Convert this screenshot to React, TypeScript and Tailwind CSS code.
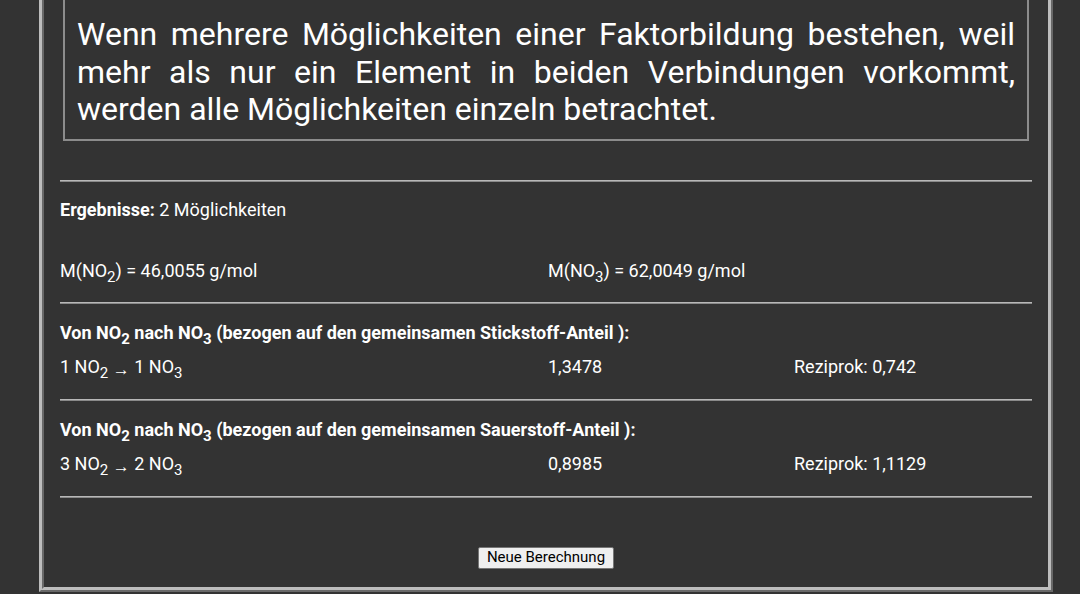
import React from "react";

function Sub({ children }: { children: React.ReactNode }) {
  return <span className="relative top-[5px] text-[15px] leading-none">{children}</span>;
}

function Rule() {
  return <div className="h-[2px] border-t border-b border-t-[#b8b8b8] border-b-[#8a8a8a]" />;
}

function ResultBlock({
  anteil,
  left,
  right,
  factor,
  reziprok,
}: {
  anteil: string;
  left: string;
  right: string;
  factor: string;
  reziprok: string;
}) {
  return (
    <div className="pt-[18px] pb-[22px]">
      <p className="font-bold">
        Von NO<Sub>2</Sub> nach NO<Sub>3</Sub> (bezogen auf den gemeinsamen {anteil}-Anteil ):
      </p>
      <div className="mt-[13px] grid grid-cols-[488px_246px_1fr]">
        <span>
          {left} NO<Sub>2</Sub> <span className="relative top-[2px] text-[17px] leading-none">→</span> {right} NO
          <Sub>3</Sub>
        </span>
        <span>{factor}</span>
        <span>Reziprok: {reziprok}</span>
      </div>
    </div>
  );
}

export default function App() {
  return (
    <div className="min-h-[594px] overflow-hidden bg-[#333333] font-['Roboto','Liberation_Sans',sans-serif] text-[18px] leading-[21px] text-white">
      <div className="ml-[39px] w-[1014px] border-[5px] border-t-0 border-[#bdbdbd] px-4 pb-[18px] [border-style:ridge]">
        <div className="mx-[3px] border-2 border-t-0 border-[#8c8c8c] px-3 pt-[16px] pb-[10px] text-justify text-[32px] leading-[37.5px]">
          Wenn mehrere Möglichkeiten einer Faktorbildung bestehen, weil mehr als nur ein Element in beiden
          Verbindungen vorkommt, werden alle Möglichkeiten einzeln betrachtet.
        </div>

        <div className="mt-[39px]">
          <Rule />
        </div>

        <div className="pt-[17px] pb-[21px]">
          <p>
            <span className="font-bold">Ergebnisse:</span> 2 Möglichkeiten
          </p>
          <div className="mt-[40px] grid grid-cols-[488px_1fr]">
            <span>
              M(NO<Sub>2</Sub>) = 46,0055 g/mol
            </span>
            <span>
              M(NO<Sub>3</Sub>) = 62,0049 g/mol
            </span>
          </div>
        </div>

        <Rule />
        <ResultBlock anteil="Stickstoff" left="1" right="1" factor="1,3478" reziprok="0,742" />
        <Rule />
        <ResultBlock anteil="Sauerstoff" left="3" right="2" factor="0,8985" reziprok="1,1129" />
        <Rule />

        <div className="mt-[49px] flex justify-center">
          <button className="h-[22px] rounded-[2px] border border-[#767676] bg-[#efefef] px-[8px] text-[15px] leading-none text-black">
            Neue Berechnung
          </button>
        </div>
      </div>
    </div>
  );
}
